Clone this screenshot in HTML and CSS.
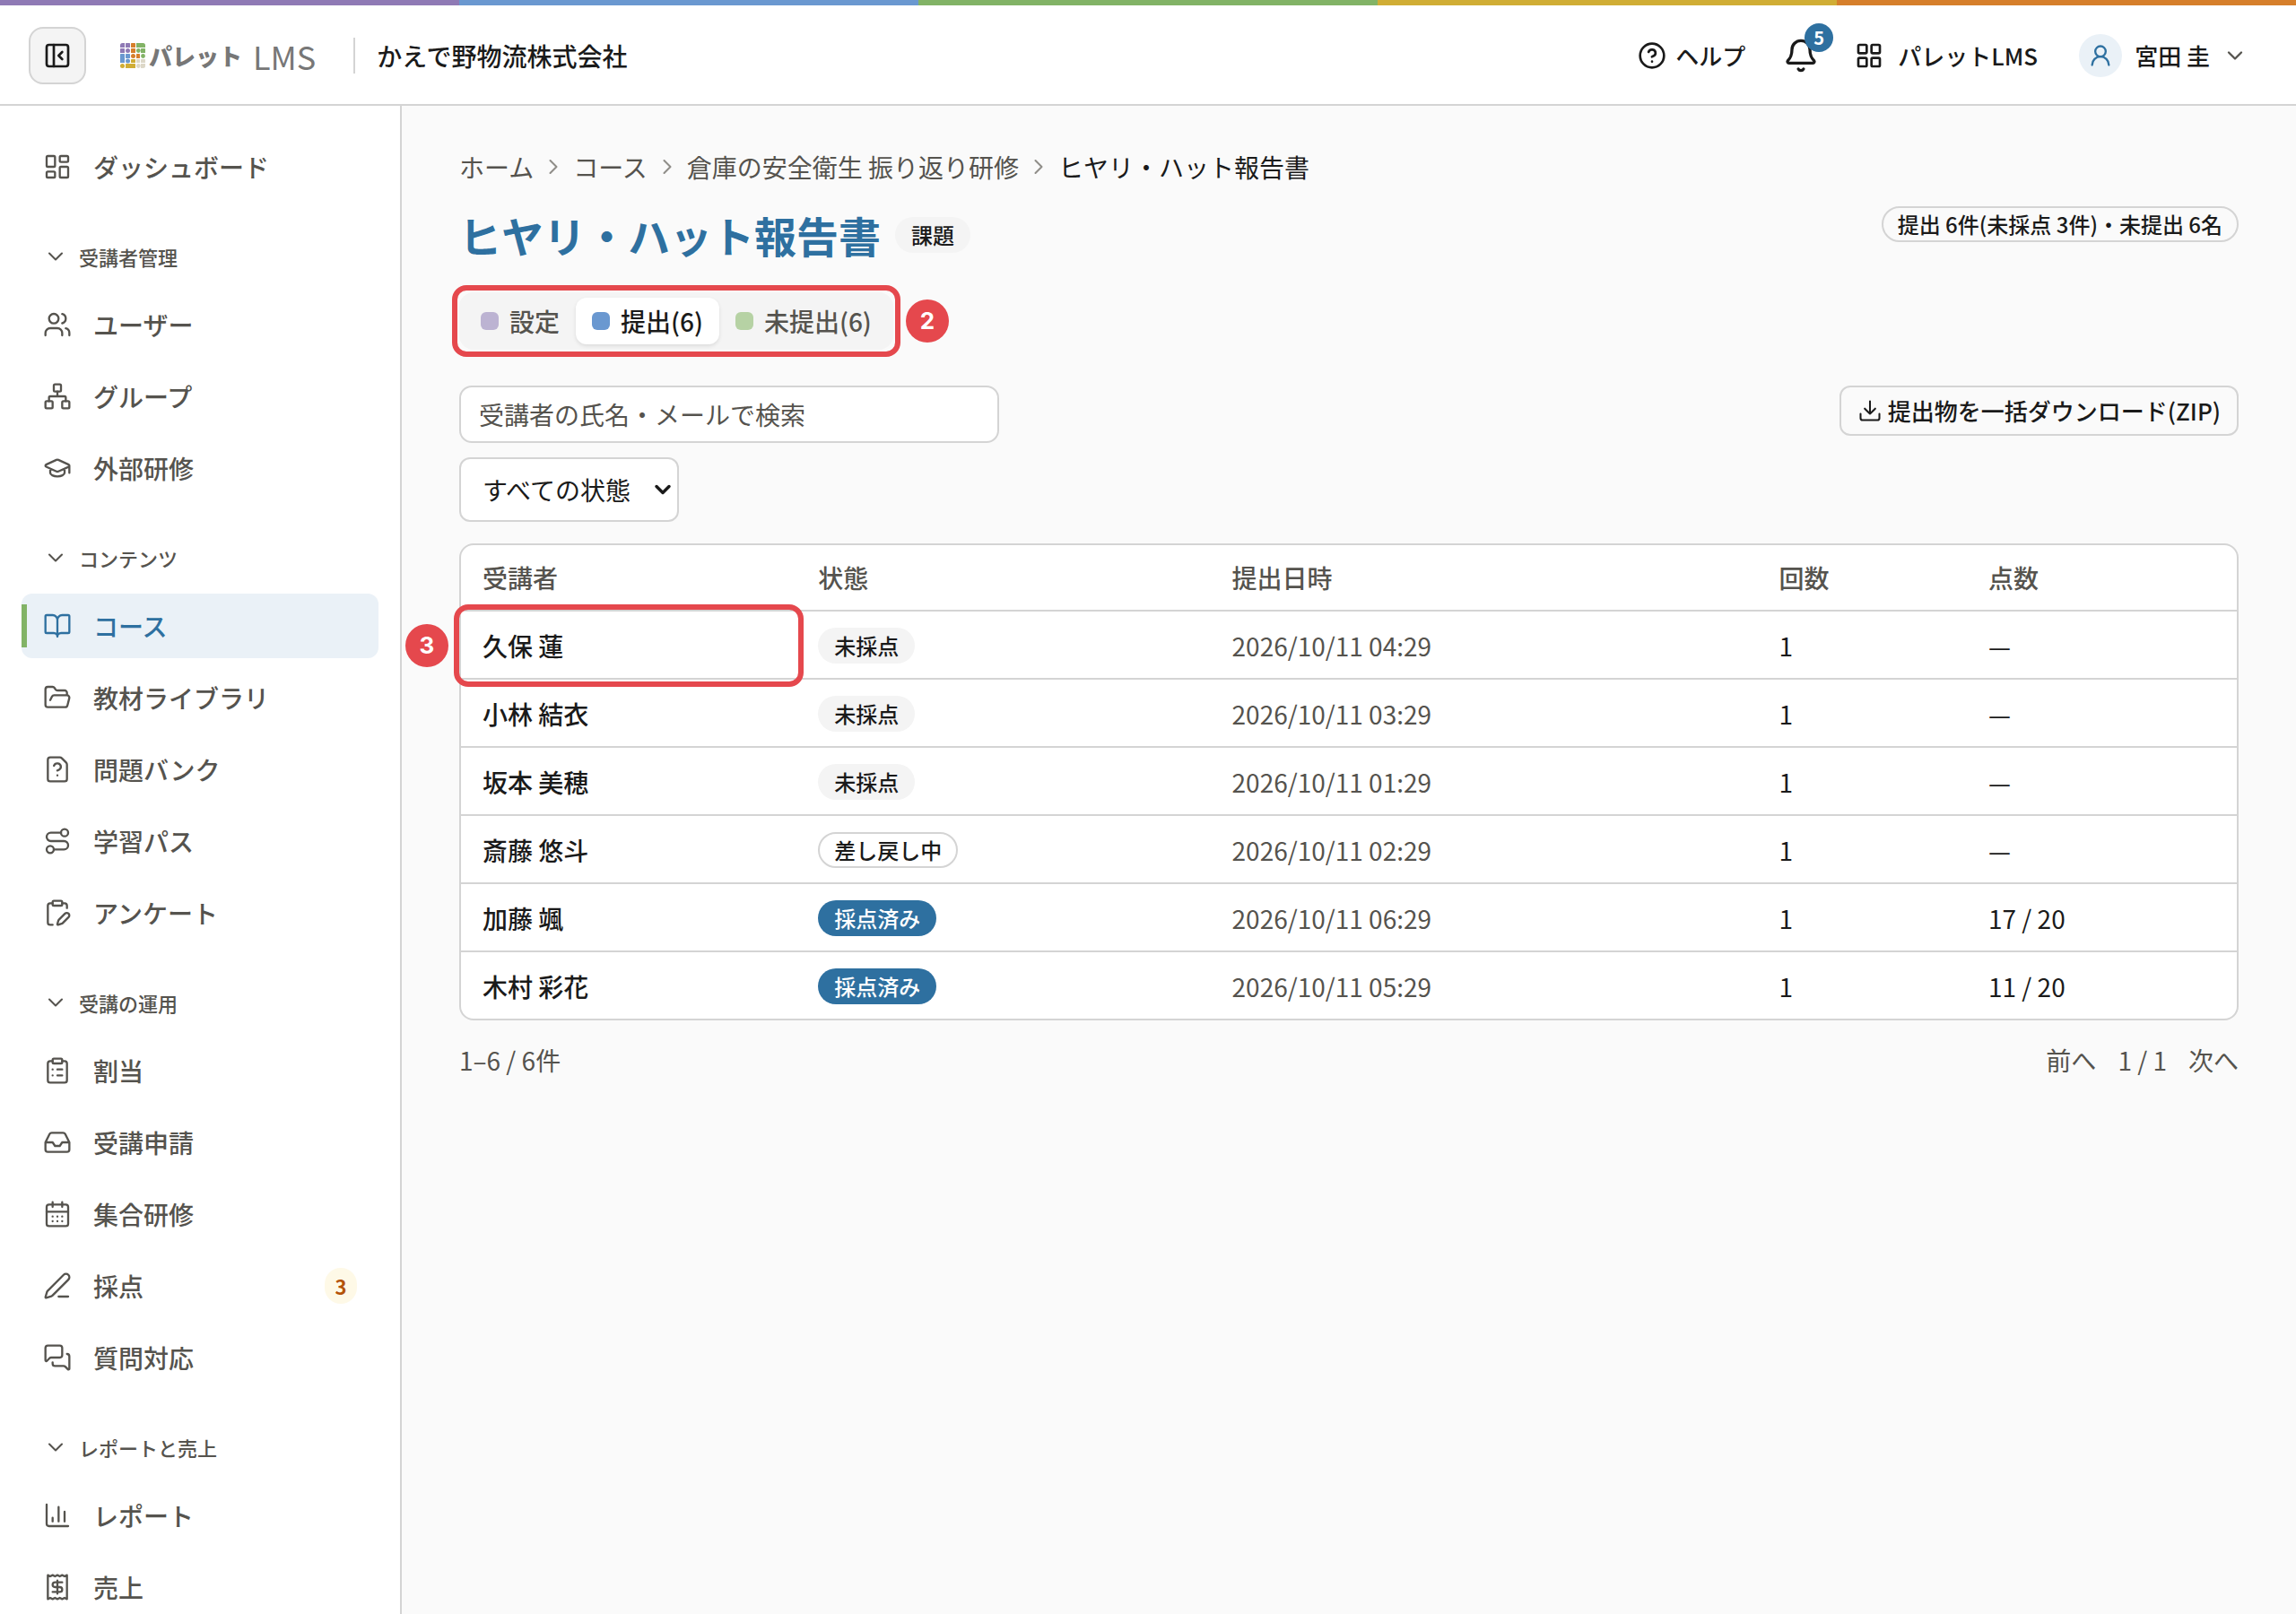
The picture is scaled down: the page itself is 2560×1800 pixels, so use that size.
FILE: index.html
```html
<!DOCTYPE html>
<html lang="ja">
<head>
<meta charset="utf-8">
<meta name="viewport" content="width=device-width, initial-scale=1">
<title>ヒヤリ・ハット報告書 | パレット LMS</title>
<link rel="stylesheet" href="styles.css">
</head>
<body>
<svg class="sprite" aria-hidden="true">
  <symbol id="i-panel" viewBox="0 0 24 24"><rect x="3" y="3" width="18" height="18" rx="2"/><path d="M9 3v18M16 15l-3-3 3-3"/></symbol>
  <symbol id="i-help" viewBox="0 0 24 24"><circle cx="12" cy="12" r="10"/><path d="M9.09 9a3 3 0 0 1 5.83 1c0 2-3 3-3 3M12 17h.01"/></symbol>
  <symbol id="i-bell" viewBox="0 0 24 24"><path d="M10.268 21a2 2 0 0 0 3.464 0M3.262 15.326A1 1 0 0 0 4 17h16a1 1 0 0 0 .74-1.673C19.41 13.956 18 12.499 18 8A6 6 0 0 0 6 8c0 4.499-1.411 5.956-2.738 7.326"/></symbol>
  <symbol id="i-grid" viewBox="0 0 24 24"><rect x="3" y="3" width="7" height="7" rx="1"/><rect x="14" y="3" width="7" height="7" rx="1"/><rect x="14" y="14" width="7" height="7" rx="1"/><rect x="3" y="14" width="7" height="7" rx="1"/></symbol>
  <symbol id="i-user" viewBox="0 0 24 24"><circle cx="12" cy="8" r="5"/><path d="M20 21a8 8 0 0 0-16 0"/></symbol>
  <symbol id="i-down" viewBox="0 0 24 24"><path d="m6 9 6 6 6-6"/></symbol>
  <symbol id="i-right" viewBox="0 0 24 24"><path d="m9 18 6-6-6-6"/></symbol>
  <symbol id="i-download" viewBox="0 0 24 24"><path d="M12 15V3M21 15v4a2 2 0 0 1-2 2H5a2 2 0 0 1-2-2v-4M7 10l5 5 5-5"/></symbol>
  <symbol id="i-dashboard" viewBox="0 0 24 24"><rect x="3" y="3" width="7" height="9" rx="1"/><rect x="14" y="3" width="7" height="5" rx="1"/><rect x="14" y="12" width="7" height="9" rx="1"/><rect x="3" y="16" width="7" height="5" rx="1"/></symbol>
  <symbol id="i-users" viewBox="0 0 24 24"><path d="M16 21v-2a4 4 0 0 0-4-4H6a4 4 0 0 0-4 4v2M16 3.128a4 4 0 0 1 0 7.744M22 21v-2a4 4 0 0 0-3-3.87"/><circle cx="9" cy="7" r="4"/></symbol>
  <symbol id="i-network" viewBox="0 0 24 24"><rect x="16" y="16" width="6" height="6" rx="1"/><rect x="2" y="16" width="6" height="6" rx="1"/><rect x="9" y="2" width="6" height="6" rx="1"/><path d="M5 16v-3a1 1 0 0 1 1-1h12a1 1 0 0 1 1 1v3M12 12V8"/></symbol>
  <symbol id="i-cap" viewBox="0 0 24 24"><path d="M21.42 10.922a1 1 0 0 0-.019-1.838L12.83 5.18a2 2 0 0 0-1.66 0L2.6 9.08a1 1 0 0 0 0 1.832l8.57 3.908a2 2 0 0 0 1.66 0zM22 10v6M6 12.5V16a6 3 0 0 0 12 0v-3.5"/></symbol>
  <symbol id="i-book" viewBox="0 0 24 24"><path d="M12 7v14M3 18a1 1 0 0 1-1-1V4a1 1 0 0 1 1-1h5a4 4 0 0 1 4 4 4 4 0 0 1 4-4h5a1 1 0 0 1 1 1v13a1 1 0 0 1-1 1h-6a3 3 0 0 0-3 3 3 3 0 0 0-3-3z"/></symbol>
  <symbol id="i-folder" viewBox="0 0 24 24"><path d="m6 14 1.5-2.9A2 2 0 0 1 9.24 10H20a2 2 0 0 1 1.94 2.5l-1.54 6a2 2 0 0 1-1.95 1.5H4a2 2 0 0 1-2-2V5a2 2 0 0 1 2-2h3.9a2 2 0 0 1 1.69.9l.81 1.2a2 2 0 0 0 1.67.9H18a2 2 0 0 1 2 2v2"/></symbol>
  <symbol id="i-question" viewBox="0 0 24 24"><path d="M6 22a2 2 0 0 1-2-2V4a2 2 0 0 1 2-2h8a2.4 2.4 0 0 1 1.704.706l3.588 3.588A2.4 2.4 0 0 1 20 8v12a2 2 0 0 1-2 2zM12 17h.01M9.1 9a3 3 0 0 1 5.82 1c0 2-3 3-3 3"/></symbol>
  <symbol id="i-route" viewBox="0 0 24 24"><circle cx="6" cy="19" r="3"/><path d="M9 19h8.5a3.5 3.5 0 0 0 0-7h-11a3.5 3.5 0 0 1 0-7H15"/><circle cx="18" cy="5" r="3"/></symbol>
  <symbol id="i-survey" viewBox="0 0 24 24"><rect x="8" y="2" width="8" height="4" rx="1"/><path d="M16 4h2a2 2 0 0 1 2 2v2M8 22H6a2 2 0 0 1-2-2V6a2 2 0 0 1 2-2h2M21.34 15.664a1 1 0 1 0-3.004-3.004l-5.01 5.012a2 2 0 0 0-.506.854l-.837 2.87a.5.5 0 0 0 .62.62l2.87-.837a2 2 0 0 0 .854-.506z"/></symbol>
  <symbol id="i-list" viewBox="0 0 24 24"><rect x="8" y="2" width="8" height="4" rx="1"/><path d="M16 4h2a2 2 0 0 1 2 2v14a2 2 0 0 1-2 2H6a2 2 0 0 1-2-2V6a2 2 0 0 1 2-2h2M12 11h4M12 16h4M8 11h.01M8 16h.01"/></symbol>
  <symbol id="i-inbox" viewBox="0 0 24 24"><path d="M22 12h-6l-2 3h-4l-2-3H2M5.45 5.11 2 12v6a2 2 0 0 0 2 2h16a2 2 0 0 0 2-2v-6l-3.45-6.89A2 2 0 0 0 16.76 4H7.24a2 2 0 0 0-1.79 1.11z"/></symbol>
  <symbol id="i-calendar" viewBox="0 0 24 24"><rect x="3" y="4" width="18" height="18" rx="2"/><path d="M8 2v4M16 2v4M3 10h18M8 14h.01M12 14h.01M16 14h.01M8 18h.01M12 18h.01M16 18h.01"/></symbol>
  <symbol id="i-pen" viewBox="0 0 24 24"><path d="M13 21h8M21.174 6.812a1 1 0 0 0-3.986-3.987L3.842 16.174a2 2 0 0 0-.5.83l-1.321 4.352a.5.5 0 0 0 .623.622l4.353-1.32a2 2 0 0 0 .83-.497z"/></symbol>
  <symbol id="i-messages" viewBox="0 0 24 24"><path d="M16 10a2 2 0 0 1-2 2H6.828a2 2 0 0 0-1.414.586l-2.202 2.202A.71.71 0 0 1 2 14.286V4a2 2 0 0 1 2-2h10a2 2 0 0 1 2 2zM20 9a2 2 0 0 1 2 2v10.286a.71.71 0 0 1-1.212.502l-2.202-2.202A2 2 0 0 0 17.172 19H10a2 2 0 0 1-2-2v-1"/></symbol>
  <symbol id="i-chart" viewBox="0 0 24 24"><path d="M3 3v16a2 2 0 0 0 2 2h16M18 17V9M13 17V5M8 17v-3"/></symbol>
  <symbol id="i-receipt" viewBox="0 0 24 24"><path d="M4 2v20l2-1 2 1 2-1 2 1 2-1 2 1 2-1 2 1V2l-2 1-2-1-2 1-2-1-2 1-2-1-2 1ZM16 8h-6a2 2 0 1 0 0 4h4a2 2 0 1 1 0 4H8M12 17.5v-11"/></symbol>
</svg>

<div class="app">
  <div class="rainbow"><span class="r1"></span><span class="r2"></span><span class="r3"></span><span class="r4"></span><span class="r5"></span></div>
  <header class="topbar">
    <button class="panel-btn" type="button" aria-label="サイドバーを閉じる"><svg class="icon"><use href="#i-panel"/></svg></button>
    <a class="logo" href="#">
      <svg class="logo-mark" viewBox="0 0 28 28" aria-hidden="true">
        <g fill="#8f7ab5"><path d="M2.5 0H5v5H0V2.5A2.500 2.500 0 0 1 2.500 0z"/><rect x="6" width="5" height="5" rx=".6"/><rect y="6" width="5" height="5" rx=".6"/><circle cx="8.500" cy="8.500" r="2.500"/></g>
        <g fill="#d67f2b"><rect x="12" width="5" height="5" rx=".6"/><rect x="12" y="6" width="5" height="5" rx=".6"/><circle cx="14.500" cy="14.500" r="2.500"/><rect x="18" y="12" width="4" height="5" rx=".6"/></g>
        <g fill="#82b366"><path d="M18 0h7.500A2.500 2.500 0 0 1 28 2.500V5H18z"/><circle cx="20.300" cy="8.500" r="2.400"/><rect x="23" y="6" width="5" height="5" rx=".6"/><circle cx="25.500" cy="14.500" r="2.400"/></g>
        <g fill="#6a98d0"><rect y="12" width="5" height="10" rx=".6"/><rect x="6" y="12" width="5" height="5" rx=".6"/><circle cx="8.500" cy="20" r="2.500"/></g>
        <g fill="#d0ad35"><rect x="12" y="18" width="5" height="4" rx=".6"/><circle cx="2.500" cy="25.500" r="2.500"/><rect x="6" y="23" width="11" height="5" rx=".6"/></g>
        <g fill="#ddd8c8"><rect x="18" y="18" width="4" height="4" rx=".6"/><rect x="23" y="18" width="5" height="4" rx=".6"/><circle cx="20.300" cy="25.500" r="2.400"/><path d="M23 23h5v2.500a2.500 2.500 0 0 1-2.500 2.500H23z"/></g>
      </svg>
      <span class="logo-name">パレット</span><span class="logo-lms">LMS</span>
    </a>
    <span class="company">かえで野物流株式会社</span>
    <div class="top-actions">
      <a class="help" href="#"><svg class="icon"><use href="#i-help"/></svg>ヘルプ</a>
      <button class="bell" type="button" aria-label="通知"><svg class="icon"><use href="#i-bell"/></svg><span class="bell-count">5</span></button>
      <button class="product" type="button"><svg class="icon"><use href="#i-grid"/></svg>パレットLMS</button>
      <button class="account" type="button"><span class="avatar"><svg class="icon"><use href="#i-user"/></svg></span>宮田 圭<svg class="icon caret"><use href="#i-down"/></svg></button>
    </div>
  </header>

  <div class="body">
    <nav class="sidebar" aria-label="メインメニュー">
      <ul class="menu">
        <li><a href="#"><svg class="icon"><use href="#i-dashboard"/></svg>ダッシュボード</a></li>
      </ul>
      <button class="group" type="button"><svg class="icon"><use href="#i-down"/></svg>受講者管理</button>
      <ul class="menu">
        <li><a href="#"><svg class="icon"><use href="#i-users"/></svg>ユーザー</a></li>
        <li><a href="#"><svg class="icon"><use href="#i-network"/></svg>グループ</a></li>
        <li><a href="#"><svg class="icon"><use href="#i-cap"/></svg>外部研修</a></li>
      </ul>
      <button class="group" type="button"><svg class="icon"><use href="#i-down"/></svg>コンテンツ</button>
      <ul class="menu">
        <li><a class="current" href="#" aria-current="page"><svg class="icon"><use href="#i-book"/></svg>コース</a></li>
        <li><a href="#"><svg class="icon"><use href="#i-folder"/></svg>教材ライブラリ</a></li>
        <li><a href="#"><svg class="icon"><use href="#i-question"/></svg>問題バンク</a></li>
        <li><a href="#"><svg class="icon"><use href="#i-route"/></svg>学習パス</a></li>
        <li><a href="#"><svg class="icon"><use href="#i-survey"/></svg>アンケート</a></li>
      </ul>
      <button class="group" type="button"><svg class="icon"><use href="#i-down"/></svg>受講の運用</button>
      <ul class="menu">
        <li><a href="#"><svg class="icon"><use href="#i-list"/></svg>割当</a></li>
        <li><a href="#"><svg class="icon"><use href="#i-inbox"/></svg>受講申請</a></li>
        <li><a href="#"><svg class="icon"><use href="#i-calendar"/></svg>集合研修</a></li>
        <li><a href="#"><svg class="icon"><use href="#i-pen"/></svg>採点<span class="count">3</span></a></li>
        <li><a href="#"><svg class="icon"><use href="#i-messages"/></svg>質問対応</a></li>
      </ul>
      <button class="group" type="button"><svg class="icon"><use href="#i-down"/></svg>レポートと売上</button>
      <ul class="menu">
        <li><a href="#"><svg class="icon"><use href="#i-chart"/></svg>レポート</a></li>
        <li><a href="#"><svg class="icon"><use href="#i-receipt"/></svg>売上</a></li>
      </ul>
    </nav>

    <main class="content">
      <nav class="crumbs" aria-label="パンくず">
        <a href="#">ホーム</a><svg class="icon"><use href="#i-right"/></svg>
        <a href="#">コース</a><svg class="icon"><use href="#i-right"/></svg>
        <a href="#">倉庫の安全衛生 振り返り研修</a><svg class="icon"><use href="#i-right"/></svg>
        <span class="here">ヒヤリ・ハット報告書</span>
      </nav>

      <div class="title-row">
        <h1>ヒヤリ・ハット報告書</h1>
        <span class="badge muted">課題</span>
        <span class="badge outline summary">提出 6件(未採点 3件)・未提出 6名</span>
      </div>

      <div class="tabs" role="tablist">
        <button class="tab" type="button" role="tab"><span class="swatch violet"></span>設定</button>
        <button class="tab selected" type="button" role="tab" aria-selected="true"><span class="swatch blue"></span>提出(6)</button>
        <button class="tab" type="button" role="tab"><span class="swatch green"></span>未提出(6)</button>
        <span class="callout"></span><span class="step step-after">2</span>
      </div>

      <div class="toolbar">
        <div class="filters">
          <input class="search" type="search" placeholder="受講者の氏名・メールで検索" aria-label="受講者の氏名・メールで検索">
          <div class="select">
            <select aria-label="状態"><option>すべての状態</option></select>
            <svg class="icon"><use href="#i-down"/></svg>
          </div>
        </div>
        <button class="download" type="button"><svg class="icon"><use href="#i-download"/></svg>提出物を一括ダウンロード(ZIP)</button>
      </div>

      <table class="submissions">
        <colgroup><col class="c-name"><col class="c-state"><col class="c-date"><col class="c-times"><col class="c-score"></colgroup>
        <thead><tr><th scope="col">受講者</th><th scope="col">状態</th><th scope="col">提出日時</th><th scope="col">回数</th><th scope="col">点数</th></tr></thead>
        <tbody>
          <tr><td class="name marked">久保 蓮<span class="callout"></span><span class="step step-before">3</span></td><td><span class="badge muted">未採点</span></td><td class="date">2026/10/11 04:29</td><td>1</td><td>—</td></tr>
          <tr><td class="name">小林 結衣</td><td><span class="badge muted">未採点</span></td><td class="date">2026/10/11 03:29</td><td>1</td><td>—</td></tr>
          <tr><td class="name">坂本 美穂</td><td><span class="badge muted">未採点</span></td><td class="date">2026/10/11 01:29</td><td>1</td><td>—</td></tr>
          <tr><td class="name">斎藤 悠斗</td><td><span class="badge outline">差し戻し中</span></td><td class="date">2026/10/11 02:29</td><td>1</td><td>—</td></tr>
          <tr><td class="name">加藤 颯</td><td><span class="badge solid">採点済み</span></td><td class="date">2026/10/11 06:29</td><td>1</td><td>17 / 20</td></tr>
          <tr><td class="name">木村 彩花</td><td><span class="badge solid">採点済み</span></td><td class="date">2026/10/11 05:29</td><td>1</td><td>11 / 20</td></tr>
        </tbody>
      </table>

      <div class="pager">
        <span class="range">1–6 / 6件</span>
        <button type="button">前へ</button><span>1 / 1</span><button type="button">次へ</button>
      </div>
    </main>
  </div>
</div>
</body>
</html>
```
FILE: styles.css
```css
:root {
  --ink: #1a1a1a;
  --sub: #55534e;
  --line: #d4d4d4;
  --primary: #2e70a0;
  --mark: #e5484d;
  --muted: #f4f4f4;
}

* { box-sizing: border-box; }

body {
  margin: 0;
  background: #fafafa;
  color: var(--ink);
  font-family: "Noto Sans CJK JP", sans-serif;
  font-size: 28px;
  line-height: 40px;
}

button, input, select { font: inherit; color: inherit; }
button { border: 0; padding: 0; background: none; }
a { color: inherit; text-decoration: none; }

.sprite { display: none; }

.icon {
  flex: none;
  width: 32px;
  height: 32px;
  fill: none;
  stroke: currentColor;
  stroke-width: 1.75;
  stroke-linecap: round;
  stroke-linejoin: round;
}

.app { display: flex; flex-direction: column; height: 100vh; overflow: hidden; }

.rainbow { display: flex; flex: none; height: 6px; }
.rainbow span { flex: 1; }
.r1 { background: #8f7ab5; }
.r2 { background: #6a98d0; }
.r3 { background: #82b366; }
.r4 { background: #d0ad35; }
.r5 { background: #d67f2b; }

/* Top bar */
.topbar {
  display: flex;
  flex: none;
  align-items: center;
  height: 112px;
  padding: 2px 54px 0 32px;
  border-bottom: 2px solid var(--line);
  background: #fff;
}
.topbar .icon { stroke-width: 2; }
.panel-btn {
  display: grid;
  place-items: center;
  width: 64px;
  height: 64px;
  border: 2px solid var(--line);
  border-radius: 16px;
  background: var(--muted);
}
.logo { display: flex; align-items: center; margin-left: 38px; color: #777; }
.logo-mark { width: 28px; height: 28px; margin-right: 4px; }
.logo-name { font-size: 26px; font-weight: 900; }
.logo-lms { margin-left: 12px; font-size: 36px; }
.company {
  margin-left: 42px;
  padding-left: 24px;
  border-left: 2px solid var(--line);
  font-weight: 500;
}
.top-actions { display: flex; align-items: center; margin-left: auto; font-size: 26px; font-weight: 500; }
.help, .product, .account { display: flex; align-items: center; }
.help { gap: 10px; }
.bell { position: relative; display: flex; margin: 0 40px 0 42px; }
.bell .icon { width: 40px; height: 40px; }
.bell-count {
  position: absolute;
  top: -16px;
  right: -16px;
  width: 32px;
  height: 32px;
  border-radius: 16px;
  background: var(--primary);
  color: #fff;
  font-size: 20px;
  font-weight: 700;
  line-height: 32px;
  text-align: center;
}
.product { gap: 16px; }
.account { gap: 14px; margin-left: 46px; }
.avatar {
  display: grid;
  place-items: center;
  width: 48px;
  height: 48px;
  border-radius: 24px;
  background: #eaf1f7;
  color: var(--primary);
}
.avatar .icon, .caret { width: 28px; height: 28px; }
.account .caret { color: var(--sub); }

/* Sidebar */
.body { display: flex; flex: 1; min-height: 0; }
.sidebar {
  flex: none;
  width: 448px;
  padding: 32px 24px;
  border-right: 2px solid var(--line);
  background: #fff;
  color: var(--sub);
  font-weight: 500;
  overflow: hidden;
}
.menu { display: grid; gap: 8px; margin: 0; padding: 0; list-style: none; }
.menu a {
  display: flex;
  align-items: center;
  gap: 24px;
  height: 72px;
  padding: 0 24px;
  border-radius: 12px;
}
.menu .current {
  background: linear-gradient(#82b366, #82b366) left center / 6px 48px no-repeat #eaf1f7;
  color: var(--primary);
}
.count {
  min-width: 36px;
  margin-left: auto;
  border-radius: 20px;
  background: #fef9e7;
  color: #b45309;
  font-size: 22px;
  font-weight: 700;
  text-align: center;
}
.group {
  display: flex;
  align-items: center;
  gap: 12px;
  height: 48px;
  margin: 40px 0 16px;
  padding: 0 24px;
  font-size: 22px;
}
.group .icon { width: 28px; height: 28px; }

/* Content */
.content { flex: 1; min-width: 0; padding: 48px 64px; }
.crumbs { display: flex; align-items: center; gap: 8px; color: var(--sub); }
.crumbs .icon { width: 28px; height: 28px; color: #8f8d88; }
.here { color: var(--ink); }

.title-row { display: flex; align-items: center; gap: 16px; margin-top: 24px; }
h1 { margin: 0; color: var(--primary); font-size: 47px; font-weight: 700; line-height: 64px; }
.badge {
  display: inline-block;
  padding: 0 16px;
  border: 2px solid transparent;
  border-radius: 20px;
  font-size: 24px;
  font-weight: 500;
  line-height: 36px;
  vertical-align: top;
}
.badge.muted { background: var(--muted); }
.badge.outline { border-color: var(--line); }
.badge.solid { background: var(--primary); color: #fff; }
.summary { align-self: flex-start; margin-left: auto; }

.tabs {
  position: relative;
  display: flex;
  width: fit-content;
  margin-top: 32px;
  padding: 6px;
  border-radius: 16px;
  background: var(--muted);
  color: var(--sub);
  font-weight: 500;
}
.tab { display: flex; align-items: center; gap: 12px; height: 52px; padding: 0 18px; border-radius: 12px; }
.tab.selected { background: #fff; color: var(--ink); box-shadow: 0 2px 4px rgb(0 0 0 / 10%); }
.swatch { width: 20px; height: 20px; border-radius: 6px; }
.violet { background: #bcb3d2; }
.blue { background: #6a98d0; }
.green { background: #b6d2a4; }

/* Numbered guide marks */
.callout {
  position: absolute;
  inset: -8px;
  border: 6px solid var(--mark);
  border-radius: 16px;
  pointer-events: none;
}
.step {
  position: absolute;
  width: 48px;
  height: 48px;
  border-radius: 24px;
  background: var(--mark);
  color: #fff;
  font-family: Inter, sans-serif;
  font-size: 26px;
  font-weight: 700;
  line-height: 48px;
  text-align: center;
}
.step-after { top: 8px; left: calc(100% + 14px); }
.step-before { top: 14px; right: calc(100% + 14px); }

.toolbar { display: flex; align-items: flex-start; justify-content: space-between; margin-top: 40px; }
.filters { display: grid; justify-items: start; gap: 16px; }
.search {
  width: 602px;
  height: 64px;
  padding: 0 20px;
  border: 2px solid var(--line);
  border-radius: 14px;
  background: #fff;
}
.search::placeholder { color: var(--sub); opacity: 1; }
.select { display: grid; align-items: center; }
.select > * { grid-area: 1 / 1; }
.select select {
  appearance: none;
  height: 72px;
  padding: 0 48px 0 24px;
  border: 2px solid var(--line);
  border-radius: 12px;
  background: #fff;
}
.select .icon { justify-self: end; width: 28px; height: 28px; margin-right: 4px; stroke-width: 3; pointer-events: none; }
.download {
  display: flex;
  align-items: center;
  gap: 6px;
  height: 56px;
  padding: 0 18px;
  border: 2px solid var(--line);
  border-radius: 12px;
  font-size: 26px;
  font-weight: 500;
}
.download .icon { width: 28px; height: 28px; }

.submissions {
  width: 100%;
  margin-top: 24px;
  border: 2px solid var(--line);
  border-radius: 16px;
  border-spacing: 0;
  background: #fff;
  table-layout: fixed;
}
.c-name { width: 18.9%; }
.c-state { width: 23.3%; }
.c-date { width: 30.8%; }
.c-times { width: 11.8%; }
.c-score { width: 15.2%; }
th, td { padding: 0 24px; border-bottom: 2px solid var(--line); text-align: left; }
th { height: 74px; color: var(--sub); font-weight: 500; }
td { height: 76px; padding-top: 2px; }
tbody tr:last-child td { height: 74px; border-bottom: 0; }
.name { font-weight: 500; }
.date { color: var(--sub); }
.marked { position: relative; }
.marked .callout { bottom: -10px; }

.pager { display: flex; gap: 24px; margin-top: 24px; color: var(--sub); }
.range { margin-right: auto; }
```
